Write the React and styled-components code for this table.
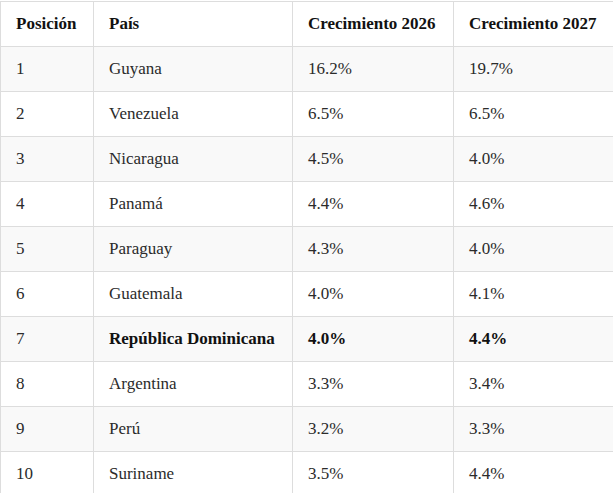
import React from 'react'
import styled, { createGlobalStyle } from 'styled-components'

const GlobalStyle = createGlobalStyle`
  html, body {
    margin: 0;
    padding: 0;
    background: #fff;
    overflow: hidden;
  }
`

const Wrap = styled.div`
  width: 613px;
  overflow: hidden;
  padding-top: 1px;
`

const Table = styled.table`
  width: 640px;
  table-layout: fixed;
  border-collapse: collapse;
  font-family: "Liberation Serif", "DejaVu Serif", serif;
  font-size: 17px;
  color: #2b2b2b;
`

const Th = styled.th`
  text-align: left;
  font-weight: 700;
  color: #111;
  padding: 10px 15px;
  line-height: 24px;
  border: 1px solid #dddddd;
`

const Row = styled.tr`
  background: ${props => (props.striped ? '#f9f9f9' : '#fff')};
`

const Td = styled.td`
  padding: 10px 15px;
  line-height: 24px;
  border: 1px solid #dddddd;
  font-weight: ${props => (props.strong ? 700 : 400)};
  color: ${props => (props.strong ? '#111' : '#2b2b2b')};
  white-space: nowrap;
`

const rows = [
  ['1', 'Guyana', '16.2%', '19.7%'],
  ['2', 'Venezuela', '6.5%', '6.5%'],
  ['3', 'Nicaragua', '4.5%', '4.0%'],
  ['4', 'Panamá', '4.4%', '4.6%'],
  ['5', 'Paraguay', '4.3%', '4.0%'],
  ['6', 'Guatemala', '4.0%', '4.1%'],
  ['7', 'República Dominicana', '4.0%', '4.4%', true],
  ['8', 'Argentina', '3.3%', '3.4%'],
  ['9', 'Perú', '3.2%', '3.3%'],
  ['10', 'Suriname', '3.5%', '4.4%'],
]

export default function App() {
  return (
    <Wrap>
      <GlobalStyle />
      <Table>
        <colgroup>
          <col style={{ width: 93 }} />
          <col style={{ width: 199 }} />
          <col style={{ width: 161 }} />
          <col style={{ width: 187 }} />
        </colgroup>
        <thead>
          <tr>
            <Th>Posición</Th>
            <Th>País</Th>
            <Th>Crecimiento 2026</Th>
            <Th>Crecimiento 2027</Th>
          </tr>
        </thead>
        <tbody>
          {rows.map(([pos, country, a, b, strong], i) => (
            <Row key={pos} striped={i % 2 === 0}>
              <Td>{pos}</Td>
              <Td strong={strong}>{country}</Td>
              <Td strong={strong}>{a}</Td>
              <Td strong={strong}>{b}</Td>
            </Row>
          ))}
        </tbody>
      </Table>
    </Wrap>
  )
}
